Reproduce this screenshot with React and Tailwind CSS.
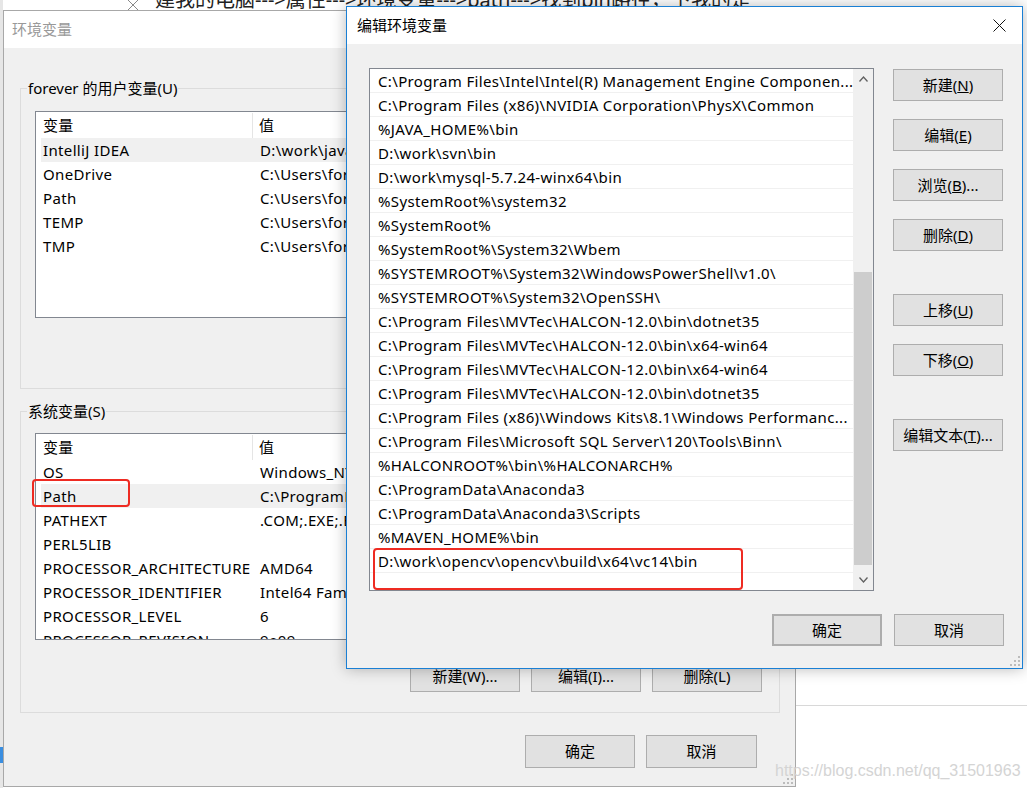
import React from 'react'

const userVars = [
  ['IntelliJ IDEA', 'D:\\work\\java\\IntelliJ IDEA 2018.2.5\\bin;', true],
  ['OneDrive', 'C:\\Users\\forever\\OneDrive'],
  ['Path', 'C:\\Users\\forever\\AppData\\Local\\Microsoft\\WindowsApps;'],
  ['TEMP', 'C:\\Users\\forever\\AppData\\Local\\Temp'],
  ['TMP', 'C:\\Users\\forever\\AppData\\Local\\Temp'],
]

const sysVars = [
  ['OS', 'Windows_NT'],
  ['Path', 'C:\\ProgramData\\Oracle\\Java\\javapath;', true],
  ['PATHEXT', '.COM;.EXE;.BAT;.CMD;.VBS;.VBE;.JS'],
  ['PERL5LIB', ''],
  ['PROCESSOR_ARCHITECTURE', 'AMD64'],
  ['PROCESSOR_IDENTIFIER', 'Intel64 Family 6 Model 158'],
  ['PROCESSOR_LEVEL', '6'],
  ['PROCESSOR_REVISION', '9e09'],
]

const paths = [
  'C:\\Program Files\\Intel\\Intel(R) Management Engine Componen...',
  'C:\\Program Files (x86)\\NVIDIA Corporation\\PhysX\\Common',
  '%JAVA_HOME%\\bin',
  'D:\\work\\svn\\bin',
  'D:\\work\\mysql-5.7.24-winx64\\bin',
  '%SystemRoot%\\system32',
  '%SystemRoot%',
  '%SystemRoot%\\System32\\Wbem',
  '%SYSTEMROOT%\\System32\\WindowsPowerShell\\v1.0\\',
  '%SYSTEMROOT%\\System32\\OpenSSH\\',
  'C:\\Program Files\\MVTec\\HALCON-12.0\\bin\\dotnet35',
  'C:\\Program Files\\MVTec\\HALCON-12.0\\bin\\x64-win64',
  'C:\\Program Files\\MVTec\\HALCON-12.0\\bin\\x64-win64',
  'C:\\Program Files\\MVTec\\HALCON-12.0\\bin\\dotnet35',
  'C:\\Program Files (x86)\\Windows Kits\\8.1\\Windows Performanc...',
  'C:\\Program Files\\Microsoft SQL Server\\120\\Tools\\Binn\\',
  '%HALCONROOT%\\bin\\%HALCONARCH%',
  'C:\\ProgramData\\Anaconda3',
  'C:\\ProgramData\\Anaconda3\\Scripts',
  '%MAVEN_HOME%\\bin',
  'D:\\work\\opencv\\opencv\\build\\x64\\vc14\\bin',
  '',
]

function Btn({ children, className = '' }) {
  return (
    <div className={`flex h-[32px] w-[110px] shrink-0 items-center justify-center border border-[#adadad] bg-[#e1e1e1] text-[15px] text-black ${className}`}>
      {children}
    </div>
  )
}

function Grip({ className = '' }) {
  const dots = [[8, 0], [8, 4], [4, 4], [8, 8], [4, 8], [0, 8]]
  return (
    <svg width="10" height="10" viewBox="0 0 10 10" className={`absolute ${className}`}>
      {dots.map(([x, y]) => (
        <rect key={x + '-' + y} x={x} y={y} width="2" height="2" fill="#bcbcbc" />
      ))}
    </svg>
  )
}

function Chevron({ up }) {
  return (
    <svg width="9" height="6" viewBox="0 0 9 6">
      <path d={up ? 'M0.5 5.5 L4.5 1 L8.5 5.5' : 'M0.5 0.5 L4.5 5 L8.5 0.5'} fill="none" stroke="#606060" strokeWidth="1.3" />
    </svg>
  )
}

// 변수 목록 (좌측 창)
function VarList({ rows, mark, className = '' }) {
  return (
    <div className={`relative ml-[14px] ${className}`}>
      <div className="h-[207px] w-[730px] overflow-hidden border border-[#828790] bg-white tracking-[0.35px]">
        <div className="flex h-[26px] items-center pt-[1px]">
          <div className="ml-[5px] flex h-full w-[212px] items-center border-r border-[#e5e5e5] pl-[2px]">变量</div>
          <div className="pl-[6px]">值</div>
        </div>
        {rows.map(([name, val, sel]) => (
          <div key={name} className={`ml-[5px] flex h-[24px] items-center whitespace-nowrap pl-[2px] pt-[1px] ${sel ? 'bg-[#f0f0f0]' : ''}`}>
            <div className="w-[217px] shrink-0">{name}</div>
            <div>{val}</div>
          </div>
        ))}
      </div>
      {mark && <div className="absolute left-[-3px] top-[46px] h-[28px] w-[98px] rounded-[4px] border-[2.5px] border-[#ee2b22]" />}
    </div>
  )
}

function EnvDialog() {
  return (
    <div className="absolute left-[3px] top-[10px] flex h-[777px] w-[793px] flex-col border border-[#a8a8a8] bg-[#f0f0f0]">
      <div className="flex h-[37px] items-center bg-white pl-[8px] text-[15px] text-[#999]">环境变量</div>
      <div className="relative flex-1 text-[15px] text-black">
        <fieldset className="ml-[16px] mt-[30px] h-[311px] w-[760px] border border-[#dcdcdc]">
          <legend className="ml-[6px] px-[1px] leading-[20px]">forever 的用户变量(U)</legend>
          <VarList rows={userVars} className="mt-[13px]" />
        </fieldset>
        <fieldset className="ml-[16px] mt-[12px] h-[312px] w-[760px] border border-[#dcdcdc]">
          <legend className="ml-[6px] px-[1px] leading-[20px]">系统变量(S)</legend>
          <VarList rows={sysVars} mark className="mt-[12px]" />
          <div className="mr-[17px] mt-[20px] flex justify-end gap-[11px]">
            <Btn className="h-[31px]">新建(W)...</Btn>
            <Btn className="h-[31px]">编辑(I)...</Btn>
            <Btn className="h-[31px]">删除(L)</Btn>
          </div>
        </fieldset>
        <div className="mr-[38px] mt-[22px] flex justify-end gap-[11px]">
          <Btn className="h-[33px]">确定</Btn>
          <Btn className="h-[33px] w-[111px]">取消</Btn>
        </div>
        <Grip className="bottom-[2px] right-[2px]" />
      </div>
    </div>
  )
}

function EditDialog() {
  return (
    <div className="absolute left-[346px] top-[6px] flex h-[663px] w-[677px] flex-col border border-[#1a7fd4] bg-[#f0f0f0] shadow-[0_0_14px_rgba(0,0,0,0.28)]">
      <div className="flex h-[37px] items-center justify-between bg-white pl-[10px] pr-[16px] text-[15px] text-black">
        <span>编辑环境变量</span>
        <svg width="13" height="13" viewBox="0 0 13 13">
          <path d="M0.5 0.5 L12.5 12.5 M12.5 0.5 L0.5 12.5" stroke="#111" strokeWidth="1" />
        </svg>
      </div>
      <div className="relative flex-1 text-[15px] text-black">
        <div className="ml-[22px] mt-[24px] flex">
          <div className="flex h-[523px] w-[505px] border border-[#828790] bg-white">
            <div className="flex-1 overflow-hidden tracking-[0.35px]">
              {paths.map((p, i) => (
                <div key={i} className="flex h-[24px] items-center overflow-hidden whitespace-nowrap border-b border-[#f0f0f0] pl-[8px] pt-[2px]">
                  {p}
                </div>
              ))}
            </div>
            <div className="flex w-[20px] flex-col bg-[#f0f0f0]">
              <div className="flex h-[20px] items-center justify-center"><Chevron up /></div>
              <div className="flex-1">
                <div className="mx-[1px] mt-[183px] h-[293px] bg-[#cdcdcd]" />
              </div>
              <div className="flex h-[20px] items-center justify-center"><Chevron /></div>
            </div>
          </div>
          <div className="ml-[19px] mt-[1px] flex flex-col">
            <Btn>新建(<u>N</u>)</Btn>
            <Btn className="mt-[18px]">编辑(<u>E</u>)</Btn>
            <Btn className="mt-[18px]">浏览(<u>B</u>)...</Btn>
            <Btn className="mt-[18px]">删除(<u>D</u>)</Btn>
            <Btn className="mt-[43px]">上移(<u>U</u>)</Btn>
            <Btn className="mt-[18px]">下移(<u>O</u>)</Btn>
            <Btn className="mt-[43px]">编辑文本(<u>T</u>)...</Btn>
          </div>
        </div>
        <div className="mr-[18px] mt-[23px] flex justify-end gap-[12px]">
          <Btn className="border-2 border-[#0078d7]">确定</Btn>
          <Btn>取消</Btn>
        </div>
        {/* 빨간 표시 박스 */}
        <div className="absolute left-[26px] top-[504px] h-[42px] w-[370px] rounded-[4px] border-[2.5px] border-[#ee2b22]" />
        <Grip className="bottom-[2px] right-[2px]" />
      </div>
    </div>
  )
}

export default function App() {
  return (
    <div className="relative h-[788px] w-[1027px] overflow-hidden bg-white font-['Noto_Sans','Noto_Sans_CJK_SC',sans-serif]">
      {/* 뒤쪽 블로그 페이지 */}
      <div className="absolute left-[155px] top-[-10px] whitespace-nowrap text-[20px] leading-none text-[#222]">
        建我的电脑---&gt;属性---&gt;环境变量---&gt;path---&gt;找到bin路径，下我的是
      </div>
      <svg width="12" height="10" viewBox="0 0 12 10" className="absolute left-[127px] top-0">
        <path d="M1 0 L11 10 M11 0 L1 10" stroke="#888" strokeWidth="1" />
      </svg>
      <div className="absolute left-0 top-0 h-full w-[3px] bg-[#e6e6e6]" />
      <div className="absolute left-0 top-[747px] h-[16px] w-[3px] bg-[#3a8ee0]" />
      <div className="absolute left-[796px] top-[705px] h-px w-[231px] bg-[#d8d8d8]" />

      <EnvDialog />
      <EditDialog />

      <div className="absolute left-[775px] top-[759px] whitespace-nowrap font-['Liberation_Sans',sans-serif] text-[16px] text-[#d4d4d4]">
        https://blog.csdn.net/qq_31501963
      </div>
    </div>
  )
}
